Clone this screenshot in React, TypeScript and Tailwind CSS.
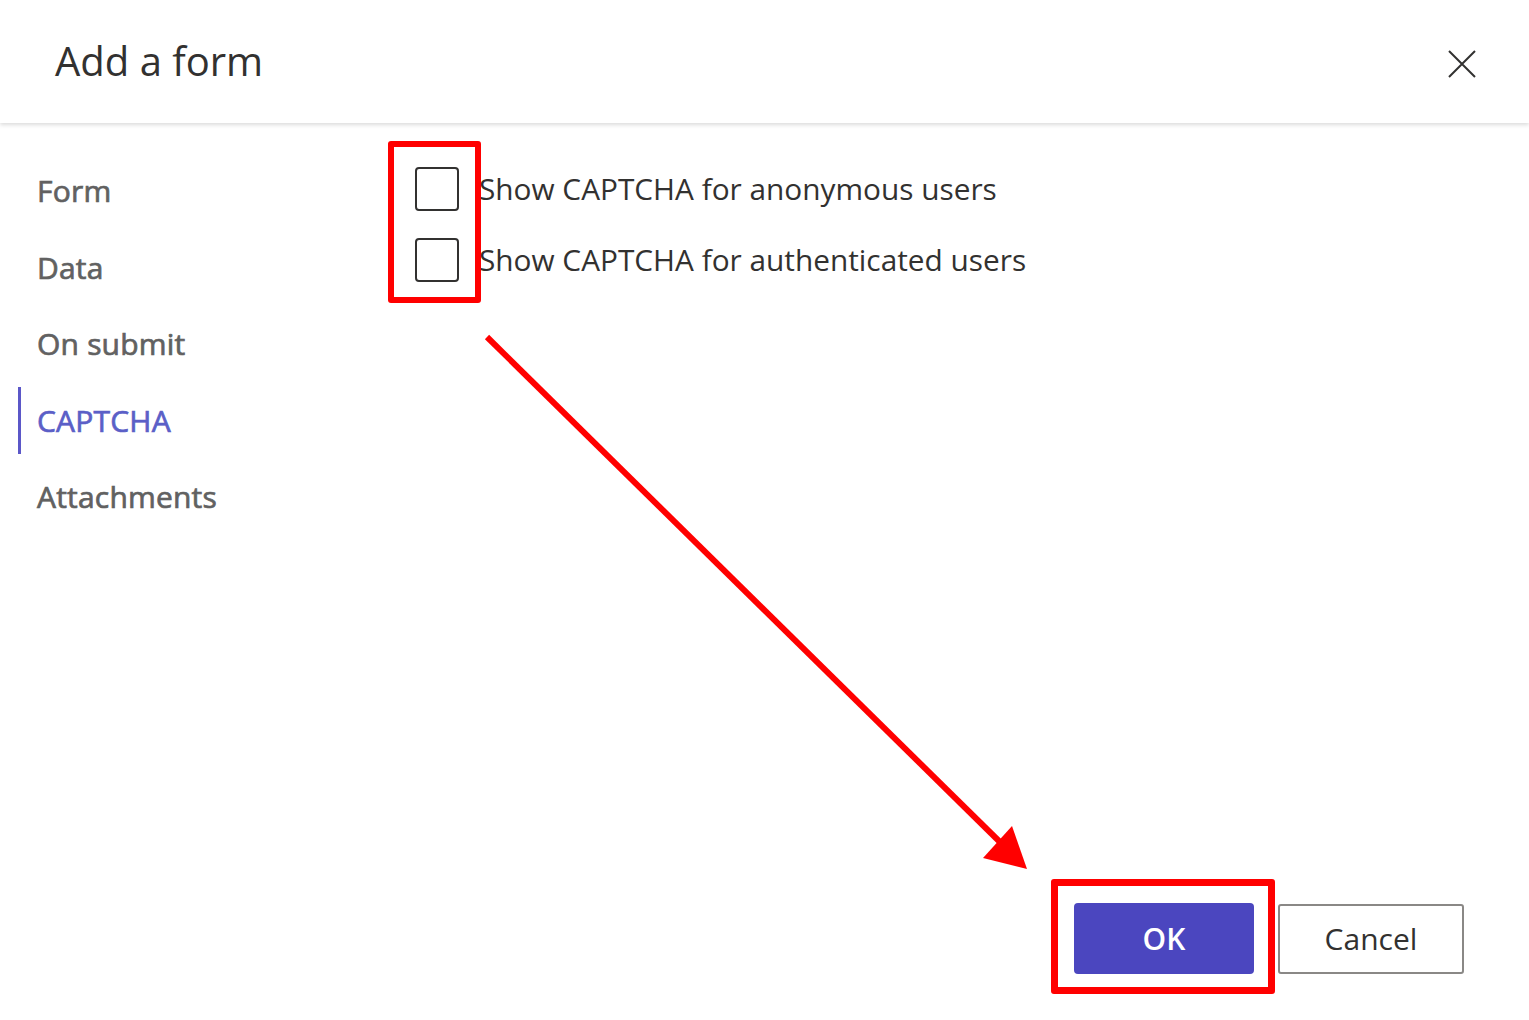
import { useState } from 'react';

const navItems = ['Form', 'Data', 'On submit', 'CAPTCHA', 'Attachments'];

function Checkbox({ label }: { label: string }) {
  const [checked, setChecked] = useState(false);
  return (
    <label className="flex items-center h-[71px] gap-[20px] cursor-pointer">
      <span
        onClick={() => setChecked(!checked)}
        className="w-[44px] h-[44px] rounded-[4px] border-2 border-[#323130] bg-white flex items-center justify-center"
      >
        {checked && <span className="text-[28px] leading-none">✓</span>}
      </span>
      <span className="text-[29.8px] text-[#323130] leading-none">{label}</span>
    </label>
  );
}

export default function App() {
  const [active, setActive] = useState('CAPTCHA');

  return (
    <div className="relative w-[1529px] h-[1020px] bg-white overflow-hidden flex flex-col font-['Open_Sans','Noto_Sans',sans-serif]">
      {/* Header */}
      <div className="relative z-10 h-[123px] shrink-0 flex items-center justify-between pl-[55px] pr-[53px] bg-white shadow-[0_2px_4px_rgba(0,0,0,0.14)]">
        <h1 className="text-[40px] text-[#323130] leading-none pb-[2px]">Add a form</h1>
        <button className="w-[28px] h-[28px] mt-[4px]">
          <svg viewBox="0 0 28 28" className="w-[28px] h-[28px]">
            <path d="M1 1L27 27M27 1L1 27" stroke="#323130" strokeWidth="2" fill="none" />
          </svg>
        </button>
      </div>

      {/* Body */}
      <div className="flex flex-1">
        <nav className="w-[415px] shrink-0 pt-[30px]">
          {navItems.map((item) => (
            <div
              key={item}
              onClick={() => setActive(item)}
              className="h-[76.5px] flex items-center cursor-pointer"
            >
              <div
                className={`ml-[18px] h-[67px] pl-[16px] border-l-[3px] flex items-center text-[30px] leading-none [-webkit-text-stroke:0.7px_currentColor] tracking-[0.2px] ${
                  active === item
                    ? 'border-[#5b57c8] text-[#5b5fc7]'
                    : 'border-transparent text-[#616161]'
                }`}
              >
                {item}
              </div>
            </div>
          ))}
        </nav>

        <div className="pt-[30px]">
          <Checkbox label="Show CAPTCHA for anonymous users" />
          <Checkbox label="Show CAPTCHA for authenticated users" />
        </div>
      </div>

      {/* Footer */}
      <div className="flex justify-end items-center gap-[24px] pr-[65px] pb-[46px]">
        <button className="w-[180px] h-[71px] rounded-[4px] bg-[#4b46bf] text-white text-[30px] font-semibold">
          OK
        </button>
        <button className="w-[186px] h-[70px] rounded-[3px] border-2 border-[#8a8886] bg-white text-[#323130] text-[30px]">
          Cancel
        </button>
      </div>

      {/* Annotations */}
      <div className="absolute left-[388px] top-[141px] w-[93px] h-[162px] border-[6px] border-[#ff0000] rounded-[3px] pointer-events-none" />
      <div className="absolute left-[1051px] top-[879px] w-[224px] h-[115px] border-[7px] border-[#ff0000] rounded-[3px] pointer-events-none" />
      <svg className="absolute left-0 top-0 w-[1529px] h-[1020px] pointer-events-none" viewBox="0 0 1529 1020">
        <line x1="487" y1="337" x2="1003" y2="845" stroke="#ff0000" strokeWidth="6" />
        <polygon points="983,858 1012,826 1027,869" fill="#ff0000" />
      </svg>
    </div>
  );
}
